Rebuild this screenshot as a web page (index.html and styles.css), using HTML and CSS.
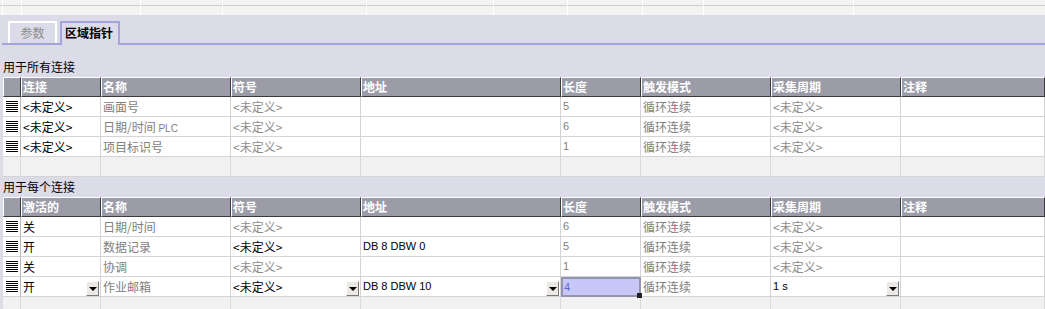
FILE: index.html
```html
<!DOCTYPE html>
<html lang="zh">
<head>
    <meta charset="UTF-8">
    <title>区域指针</title>
    <link rel="stylesheet" href="styles.css">
</head>
<body>
    <div class="strip">
        <span class="w2"></span><span class="w19"></span><span class="w119"></span><span class="w82"></span><span class="w144"></span><span class="w127"></span><span class="w74"></span><span class="w75"></span><span class="w61"></span><span class="w150"></span>
    </div>

    <div class="tabs">
        <div class="tab">参数</div>
        <div class="tab active">区域指针</div>
    </div>

    <div class="label">用于所有连接</div>
    <div class="grid">
        <div class="c hd"></div><div class="c hd">连接</div><div class="c hd">名称</div><div class="c hd">符号</div><div class="c hd">地址</div><div class="c hd">长度</div><div class="c hd">触发模式</div><div class="c hd">采集周期</div><div class="c hd">注释</div>

        <div class="c rh"></div><div class="c">&lt;未定义&gt;</div><div class="c g">画面号</div><div class="c g2">&lt;未定义&gt;</div><div class="c"></div><div class="c g lat">5</div><div class="c g">循环连续</div><div class="c g2">&lt;未定义&gt;</div><div class="c"></div>

        <div class="c rh"></div><div class="c">&lt;未定义&gt;</div><div class="c g">日期/时间 <span class="sm">PLC</span></div><div class="c g2">&lt;未定义&gt;</div><div class="c"></div><div class="c g lat">6</div><div class="c g">循环连续</div><div class="c g2">&lt;未定义&gt;</div><div class="c"></div>

        <div class="c rh"></div><div class="c">&lt;未定义&gt;</div><div class="c g">项目标识号</div><div class="c g2">&lt;未定义&gt;</div><div class="c"></div><div class="c g lat">1</div><div class="c g">循环连续</div><div class="c g2">&lt;未定义&gt;</div><div class="c"></div>

        <div class="c e"></div><div class="c e"></div><div class="c e"></div><div class="c e"></div><div class="c e"></div><div class="c e"></div><div class="c e"></div><div class="c e"></div><div class="c e"></div>
    </div>

    <div class="label">用于每个连接</div>
    <div class="grid">
        <div class="c hd"></div><div class="c hd">激活的</div><div class="c hd">名称</div><div class="c hd">符号</div><div class="c hd">地址</div><div class="c hd">长度</div><div class="c hd">触发模式</div><div class="c hd">采集周期</div><div class="c hd">注释</div>

        <div class="c rh"></div><div class="c">关</div><div class="c g">日期/时间</div><div class="c g2">&lt;未定义&gt;</div><div class="c"></div><div class="c g lat">6</div><div class="c g">循环连续</div><div class="c g2">&lt;未定义&gt;</div><div class="c"></div>

        <div class="c rh"></div><div class="c">开</div><div class="c g">数据记录</div><div class="c">&lt;未定义&gt;</div><div class="c lat">DB 8 DBW 0</div><div class="c g lat">5</div><div class="c g">循环连续</div><div class="c g2">&lt;未定义&gt;</div><div class="c"></div>

        <div class="c rh"></div><div class="c">关</div><div class="c g">协调</div><div class="c g2">&lt;未定义&gt;</div><div class="c"></div><div class="c g lat">1</div><div class="c g">循环连续</div><div class="c g2">&lt;未定义&gt;</div><div class="c"></div>

        <div class="c rh"></div>
        <div class="c dd"><span>开</span><span class="btn"></span></div>
        <div class="c g">作业邮箱</div>
        <div class="c dd"><span>&lt;未定义&gt;</span><span class="btn"></span></div>
        <div class="c dd lat"><span>DB 8 DBW 10</span><span class="btn"></span></div>
        <div class="c sel lat">4</div>
        <div class="c g">循环连续</div>
        <div class="c dd lat"><span>1 s</span><span class="btn"></span></div>
        <div class="c"></div>

        <div class="c e"></div><div class="c e"></div><div class="c e"></div><div class="c e"></div><div class="c e"></div><div class="c e"></div><div class="c e"></div><div class="c e"></div><div class="c e"></div>
    </div>
</body>
</html>
```

FILE: styles.css
```css
* {margin: 0; padding: 0; box-sizing: border-box;}
body {background: #dcdce8; font: 12px "Noto Sans CJK SC", sans-serif; color: #000; height: 309px; overflow: hidden;}

/* strip of the table above, cut off */
.strip {display: flex; height: 15px; background: linear-gradient(#f3f3f3 0 5px, #cdcdcd 5px 6px, #f3f3f3 6px);}
.strip span {flex: none; height: 15px; border-right: 1px solid #fff;}
.strip .w2 {width: 3px;}
.strip .w19 {width: 19px;}
.strip .w119 {width: 119px;}
.strip .w82 {width: 82px;}
.strip .w144 {width: 144px;}
.strip .w127 {width: 127px;}
.strip .w74 {width: 74px;}
.strip .w75 {width: 75px;}
.strip .w61 {width: 61px;}
.strip .w150 {width: 150px;}

/* tabs */
.tabs {display: flex; align-items: flex-end; height: 30px; margin-left: 2px; padding-left: 6px; border-bottom: 2px solid #a4a4dc;}
.tab {width: 49px; height: 22px; border: 2px solid #fff; border-bottom: 0; color: #8c8c8c; text-align: center; line-height: 19px;}
.tab.active {width: 60px; height: 24px; margin-left: 3px; margin-bottom: -2px; border-color: #a4a4dc; background: #dcdce8; color: #000; font-weight: bold; text-align: left; padding-left: 3px;}

.label {height: 20px; line-height: 20px; padding-left: 3px;}
.tabs + .label {margin-top: 12px;}

/* tables */
.grid {display: grid; grid-template-columns: 18px 80px 130px 130px 200px 80px 130px 130px 1fr; grid-auto-rows: 20px; margin-left: 3px;}
.c {background: #fff; border-right: 1px solid #d4d4d4; border-bottom: 1px solid #d4d4d4; padding-left: 2px; line-height: 19px; white-space: nowrap; overflow: hidden;}
.c.hd {background: #9c9ca8; color: #fff; font-weight: bold; border-top: 1px solid #fff; border-left: 1px solid #fff; border-right-color: #3a3a3a; border-bottom-color: #3a3a3a; padding-left: 1px; line-height: 17px;}
.c.rh {display: flex; align-items: center; justify-content: center; padding: 0; border-right-color: #b8b8b8;}
.c.rh::before {content: ""; width: 12px; height: 11px; background: repeating-linear-gradient(#000 0 1px, transparent 1px 2px);}
.c.e {background: #f1f1f1; border-right-color: #dadada;}
.g {color: #808080;}
.g2 {color: #8c8c8c;}
.lat {font-family: "Liberation Sans", sans-serif; font-size: 11px;}
.sm {font-family: "Liberation Sans", sans-serif; font-size: 10px;}

/* dropdown cells */
.c.dd {display: flex; justify-content: space-between; padding-right: 1px;}
.btn {flex: none; align-self: flex-end; width: 13px; height: 15px; background: #ece9e4; border: 1px solid; border-color: #fff #7a7a7a #7a7a7a #fff; display: flex; align-items: center; justify-content: center;}
.btn::after {content: ""; border-left: 4px solid transparent; border-right: 4px solid transparent; border-top: 4px solid #000;}

/* selected cell */
.c.sel {position: relative; overflow: visible; background: #c8c8f8; border: 2px solid #9494b0; color: #6464c8; padding-left: 1px; line-height: 16px;}
.c.sel::after {content: ""; position: absolute; right: -3px; bottom: -3px; width: 5px; height: 5px; background: #222;}
```
